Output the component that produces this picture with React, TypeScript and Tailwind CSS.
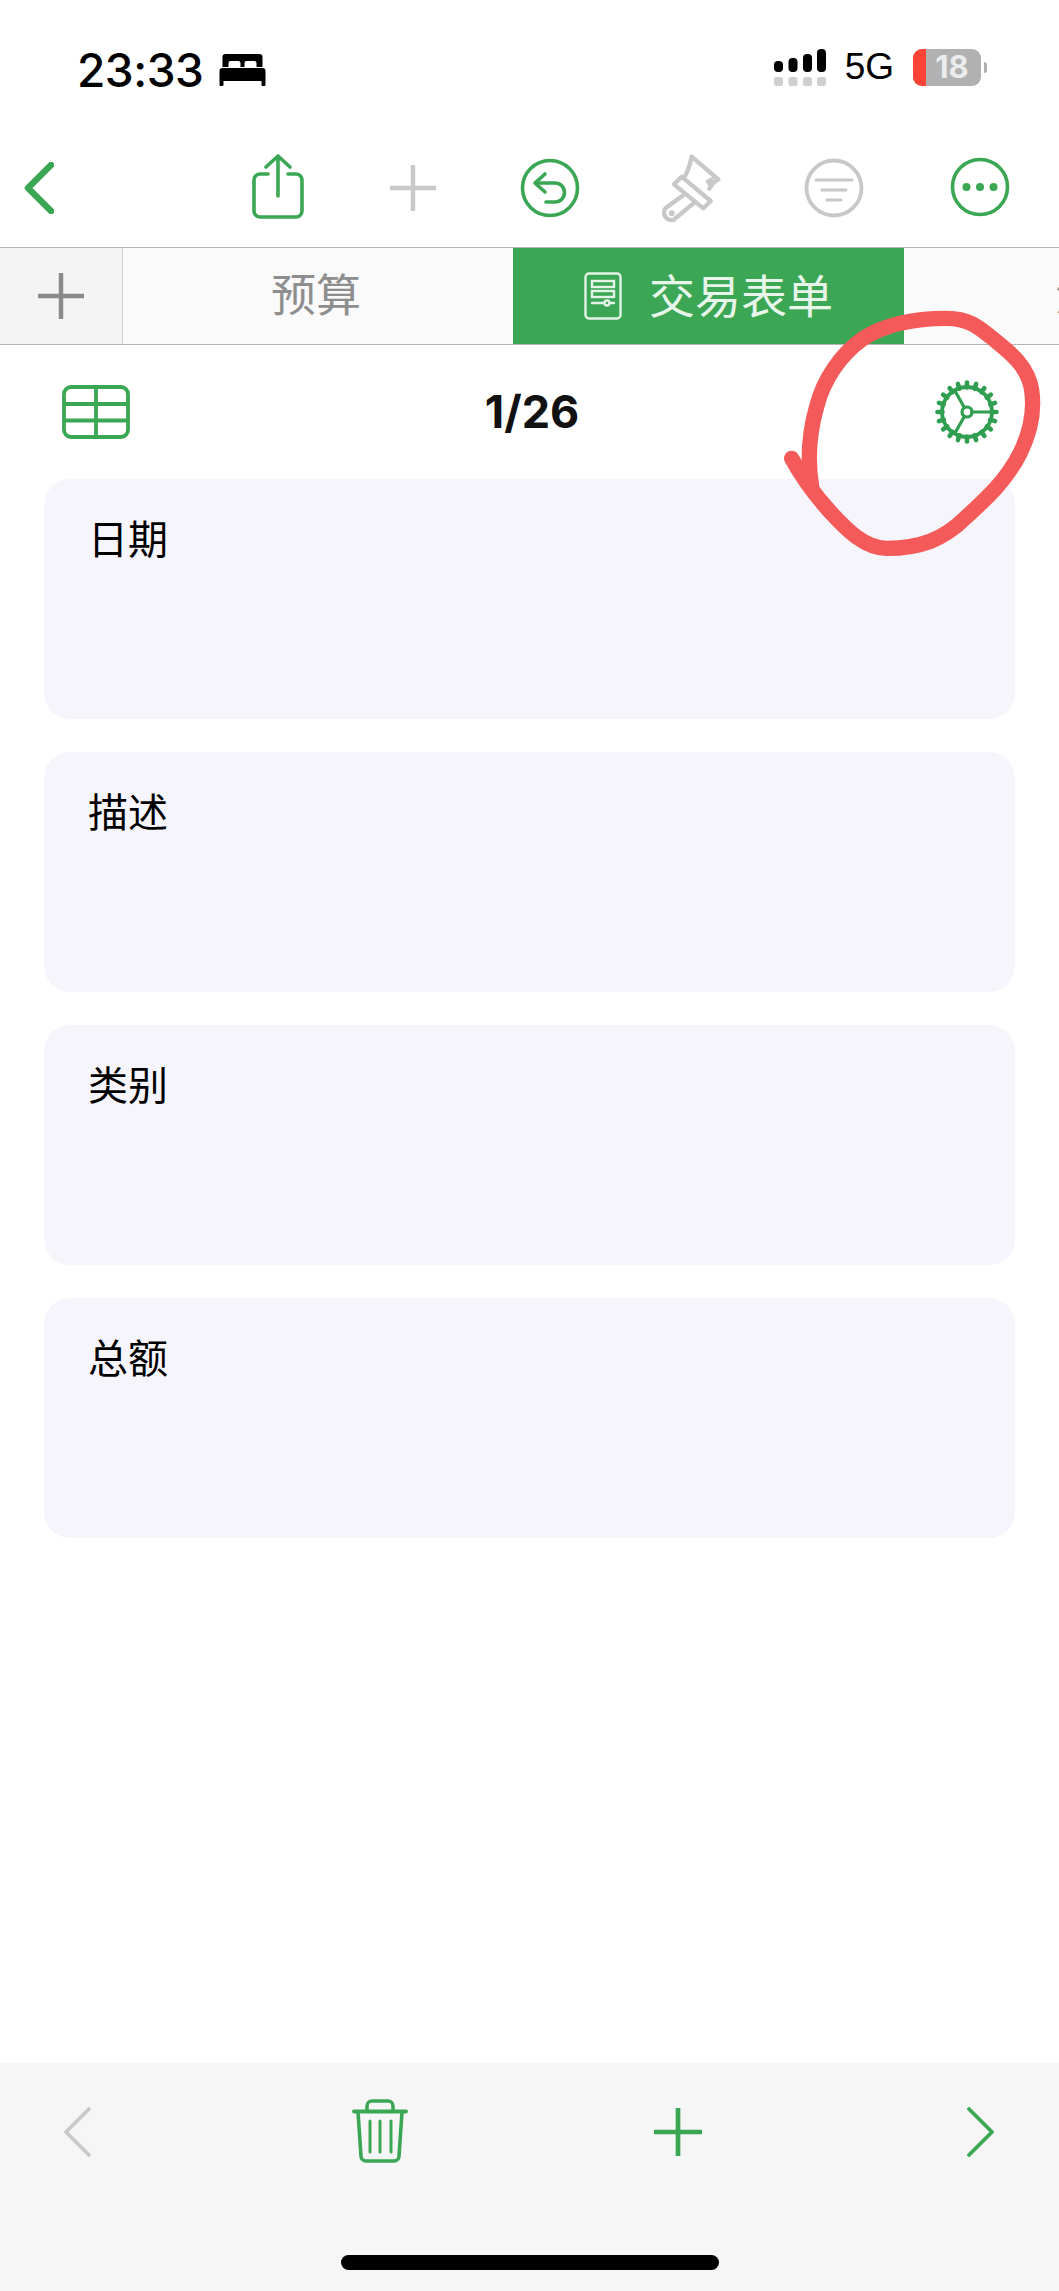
const green = '#3ba755';

function ChevronLeft({ color, width = 4 }: { color: string; width?: number }) {
  return (
    <svg width="30" height="52" viewBox="0 0 30 52" fill="none">
      <path d="M27 3 4 26l23 23" stroke={color} strokeWidth={width} strokeLinecap="round" strokeLinejoin="round" />
    </svg>
  );
}

function PlusIcon({ color, size = 46, width = 4 }: { color: string; size?: number; width?: number }) {
  return (
    <svg width={size} height={size} viewBox="0 0 46 46" fill="none">
      <path d="M23 1v44M1 23h44" stroke={color} strokeWidth={width} strokeLinecap="round" />
    </svg>
  );
}

function ShareIcon() {
  return (
    <svg width="52" height="66" viewBox="0 0 52 66" fill="none" stroke={green} strokeWidth="3.6" strokeLinecap="round" strokeLinejoin="round">
      <path d="M16 20H8a6 6 0 0 0-6 6v31a6 6 0 0 0 6 6h36a6 6 0 0 0 6-6V26a6 6 0 0 0-6-6h-8" />
      <path d="M26 42V3M14 13 26 2l12 11" />
    </svg>
  );
}

function UndoIcon() {
  return (
    <svg width="60" height="60" viewBox="0 0 60 60" fill="none" stroke={green} strokeWidth="3.6" strokeLinecap="round" strokeLinejoin="round">
      <circle cx="30" cy="30" r="27.5" />
      <path d="M25 16 15 25l10 9" />
      <path d="M16 25h19a8.500 8.500 0 0 1 0 19h-9" />
    </svg>
  );
}

function BrushIcon() {
  return (
    <svg width="60" height="70" viewBox="36 24 180 210" fill="none" stroke="#c8c8c8" strokeWidth="13" strokeLinejoin="round" strokeLinecap="round">
      <path d="M125 32 205 100C195 105 185 115 178 128M125 32C120 55 115 80 100 97" />
      <path d="M168 105 192 92 178 122Z" fill="#c8c8c8" strokeWidth="4" />
      <path d="M72 115 95 92 182 165 160 187Z" />
      <path d="M100 148 48 185C35 200 45 225 70 222L133 170" />
      <circle cx="65" cy="202" r="9" fill="#c8c8c8" stroke="none" />
    </svg>
  );
}

function FilterIcon() {
  return (
    <svg width="60" height="60" viewBox="0 0 60 60" fill="none" stroke="#c8c8c8" strokeLinecap="round">
      <circle cx="30" cy="30" r="27.500" strokeWidth="3.800" />
      <path d="M12 22h36M18 32h24M23 42h14" strokeWidth="3" />
    </svg>
  );
}

function MoreIcon() {
  return (
    <svg width="60" height="60" viewBox="0 0 60 60" fill="none">
      <circle cx="30" cy="30" r="27.500" stroke={green} strokeWidth="3.600" />
      <circle cx="16.500" cy="30" r="4" fill={green} />
      <circle cx="30" cy="30" r="4" fill={green} />
      <circle cx="43.500" cy="30" r="4" fill={green} />
    </svg>
  );
}

function BedIcon() {
  return (
    <svg width="47" height="32" viewBox="0 0 46 32" fill="#000">
      <path d="M6 0h34a3 3 0 0 1 3 3v10h-6V9a2 2 0 0 0-2-2H27a2 2 0 0 0-2 2v4h-4V9a2 2 0 0 0-2-2H11a2 2 0 0 0-2 2v4H3V3a3 3 0 0 1 3-3Z" />
      <path d="M3 14h40a3 3 0 0 1 3 3v10H0V17a3 3 0 0 1 3-3ZM0 27h4v4a1 1 0 0 1-1 1H1a1 1 0 0 1-1-1ZM42 27h4v4a1 1 0 0 1-1 1h-2a1 1 0 0 1-1-1Z" />
    </svg>
  );
}

function SignalIcon() {
  return (
    <svg width="52" height="37" viewBox="0 0 52 37">
      <rect x="0" y="12" width="9" height="11" rx="4" fill="#000" />
      <rect x="14.500" y="9" width="9" height="14" rx="4" fill="#000" />
      <rect x="29" y="5" width="9" height="18" rx="4" fill="#000" />
      <rect x="43" y="0" width="9" height="23" rx="4" fill="#000" />
      <rect x="0" y="28" width="9" height="9" rx="2.500" fill="#cfcfcf" />
      <rect x="14.500" y="28" width="9" height="9" rx="2.500" fill="#cfcfcf" />
      <rect x="29" y="28" width="9" height="9" rx="2.500" fill="#cfcfcf" />
      <rect x="43" y="28" width="9" height="9" rx="2.500" fill="#cfcfcf" />
    </svg>
  );
}

function Battery() {
  return (
    <div className="flex items-center gap-[3px]">
      <div className="w-[68px] h-[37px] rounded-[9px] bg-[#b1b1b1] overflow-hidden flex">
        <div className="w-[13px] bg-[#fb4336]" />
        <span className="flex-1 text-center text-[31px] leading-[36px] font-bold text-[#ececec] pr-[3px] font-['Inter',sans-serif]">18</span>
      </div>
      <div className="w-[3px] h-[11px] rounded-r-full bg-[#b1b1b1]" />
    </div>
  );
}

function FormIcon() {
  return (
    <svg width="38" height="48" viewBox="0 0 38 48" fill="none" stroke="#e4f3e7" strokeWidth="2.400" strokeLinecap="round">
      <rect x="1.500" y="1.500" width="35" height="45" rx="3.500" />
      <rect x="8" y="9" width="22" height="6" />
      <rect x="8" y="19" width="22" height="6" />
      <path d="M8 31h22" />
      <circle cx="23" cy="31" r="2.500" fill={green} />
    </svg>
  );
}

function TableIcon() {
  return (
    <svg width="68" height="54" viewBox="0 0 68 54" fill="none" stroke={green} strokeWidth="3.800">
      <rect x="2" y="2" width="64" height="50" rx="7" />
      <path d="M2 19h64M2 35.500h64M34 2v50" />
    </svg>
  );
}

function GearIcon() {
  const teeth = Array.from({ length: 20 }, (_, i) => i * 18);
  return (
    <svg width="66" height="66" viewBox="0 0 66 66" fill="none" stroke="#2f9e4f" strokeLinecap="round">
      {teeth.map(deg => (
        <path key={deg} d="M33 3.500v5" strokeWidth="4.600" transform={`rotate(${deg} 33 33)`} />
      ))}
      <circle cx="33" cy="33" r="25" strokeWidth="3.800" />
      <circle cx="33" cy="33" r="5" strokeWidth="3.200" />
      <path d="M38 33h20M30.500 37.300 21 54M30.500 28.700 21 12" strokeWidth="3.200" />
    </svg>
  );
}

function TrashIcon() {
  return (
    <svg width="56" height="64" viewBox="0 0 56 64" fill="none" stroke={green} strokeLinecap="round" strokeLinejoin="round">
      <path d="M15 12V7a5 5 0 0 1 5-5h16a5 5 0 0 1 5 5v5" strokeWidth="3.600" />
      <path d="M2 12.500h52" strokeWidth="4" />
      <path d="M6 13l3 44a5 5 0 0 0 5 5h28a5 5 0 0 0 5-5l3-44" strokeWidth="3.600" />
      <path d="M18 22v31M28 22v31M39 22v31" strokeWidth="3" />
    </svg>
  );
}

function ChevronThin({ color, flip }: { color: string; flip?: boolean }) {
  return (
    <svg width="28" height="50" viewBox="0 0 28 50" fill="none" className={flip ? 'rotate-180' : ''}>
      <path d="M26 2 3 25l23 23" stroke={color} strokeWidth="3.800" strokeLinecap="round" strokeLinejoin="round" />
    </svg>
  );
}

function FieldCard({ label }: { label: string }) {
  return (
    <div className="h-[240px] rounded-[26px] bg-[#f5f5fb] pl-[44px] pt-[36px]">
      <span className="text-[40px] leading-[50px] text-black">{label}</span>
    </div>
  );
}

export default function App() {
  return (
    <div className="relative w-[1059px] h-[2291px] overflow-hidden bg-white flex flex-col font-['Inter','Noto_Sans_CJK_SC',sans-serif]">

      {/* status bar */}
      <div className="h-[154px] shrink-0 flex items-start justify-between pl-[77px] pr-[72px] pt-[46px]">
        <div className="flex items-center gap-[16px] h-[48px]">
          <span className="text-[46px] leading-[48px] font-medium text-black tracking-[-0.5px]">23:33</span>
          <BedIcon />
        </div>
        <div className="flex items-center h-[48px] mt-[-3px]">
          <SignalIcon />
          <span className="ml-[19px] mr-[19px] text-[37px] leading-[48px] text-black font-['Liberation_Sans',sans-serif]">5G</span>
          <Battery />
        </div>
      </div>

      {/* toolbar */}
      <div className="h-[93px] shrink-0 relative flex items-start">
        <div className="ml-[24px] mt-[8px]"><ChevronLeft color={green} width={6.500} /></div>
        <div className="ml-[198px]"><ShareIcon /></div>
        <div className="ml-[86px] mt-[11px]"><PlusIcon color="#c9c9c9" width={4.500} /></div>
        <div className="ml-[84px] mt-[4px]"><UndoIcon /></div>
        <div className="ml-[82px]"><BrushIcon /></div>
        <div className="ml-[82px] mt-[4px]"><FilterIcon /></div>
        <div className="ml-[86px] mt-[3px]"><MoreIcon /></div>
      </div>

      {/* sheet tabs */}
      <div className="h-[98px] shrink-0 flex border-y border-[#b4b4b4] bg-[#fafafa] overflow-hidden">
        <div className="w-[123px] shrink-0 flex items-center justify-center bg-[#f4f4f4] border-r border-[#cfcfcf]">
          <PlusIcon color="#8a8a8a" width={4.500} />
        </div>
        <div className="w-[390px] shrink-0 flex items-center justify-center text-[45px] text-[#8e8e8e] pr-[4px]">预算</div>
        <div className="w-[391px] shrink-0 flex items-center justify-center gap-[27px] bg-[#3ba755] text-[46px] text-[#e8f5ea]">
          <FormIcon />
          <span>交易表单</span>
        </div>
        <div className="flex-1 pl-[151px] flex items-center text-[45px] text-[#8e8e8e] whitespace-nowrap">汇总</div>
      </div>

      {/* form header */}
      <div className="h-[134px] shrink-0 flex items-center justify-between pl-[62px] pr-[59px]">
        <TableIcon />
        <span className="text-[45px] font-bold text-[#111]">1/26</span>
        <GearIcon />
      </div>

      {/* fields */}
      <div className="flex flex-col gap-[33px] pl-[44px] pr-[44px]">
        <FieldCard label="日期" />
        <FieldCard label="描述" />
        <FieldCard label="类别" />
        <FieldCard label="总额" />
      </div>

      {/* bottom bar */}
      <div className="mt-auto h-[228px] shrink-0 bg-[#f6f6f6] flex flex-col">
        <div className="flex items-start justify-between pl-[63px] pr-[64px] pt-[36px]">
          <div className="mt-[8px]"><ChevronThin color="#c9c9c9" /></div>
          <div className="ml-[261px]"><TrashIcon /></div>
          <div className="ml-[246px] mt-[9px]"><PlusIcon color={green} size={48} width={4.500} /></div>
          <div className="ml-[265px] mt-[8px]"><ChevronThin color={green} flip /></div>
        </div>
        <div className="mt-auto mb-[21px] self-center ml-[1px] w-[378px] h-[15px] rounded-full bg-black" />
      </div>

      {/* hand drawn annotation over the gear */}
      <svg className="absolute left-[740px] top-[290px]" width="319" height="290" viewBox="0 0 957 870" fill="none">
        <path
          d="M155 505C185 560 225 615 270 665C320 720 375 775 440 775C540 775 610 750 680 680C740 625 800 570 840 490C870 430 885 370 875 300C865 235 820 195 770 155C720 115 690 85 620 85C530 85 440 100 370 145C300 195 250 270 230 350C210 420 200 500 215 590"
          stroke="#f55a5a"
          strokeWidth="46"
          strokeLinecap="round"
          strokeLinejoin="round"
        />
      </svg>
    </div>
  );
}
